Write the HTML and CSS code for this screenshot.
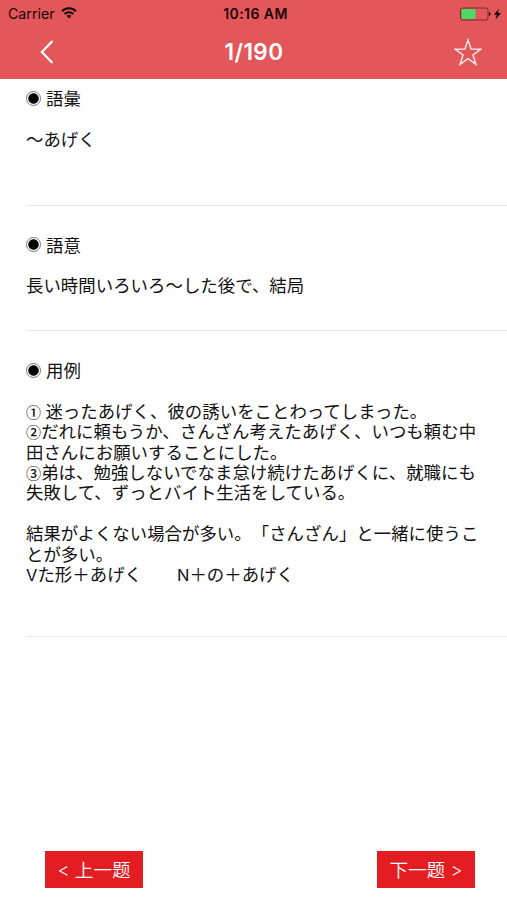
FILE: index.html
```html
<!DOCTYPE html>
<html lang="ja">
<head>
<meta charset="utf-8">
<title>1/190</title>
<link rel="stylesheet" href="styles.css">
</head>
<body>
<header class="header">
  <div class="status">
    <div class="status-left"><span class="carrier">Carrier</span>
      <svg class="wifi" viewBox="0 0 16 12" width="16" height="12"><g fill="none" stroke="#180506" stroke-width="2"><path d="M1 4.2a10 10 0 0 1 14 0"/><path d="M3.6 7a6.2 6.2 0 0 1 8.8 0"/></g><path fill="#180506" d="M5.6 9a3.4 3.4 0 0 1 4.8 0L8 11.4z"/></svg>
    </div>
    <span class="time">10:16 AM</span>
    <div class="status-right">
      <svg viewBox="0 0 43 14" width="43" height="14"><rect x=".5" y="1" width="27.5" height="12" rx="2" fill="none" stroke="#762e2d"/><rect x="1.5" y="2" width="14" height="10" rx="1" fill="#4cd964"/><path d="M29 5a2.1 2.1 0 0 1 0 4z" fill="#180506"/><path d="M39 1.8 33.8 7.8h3l-1.3 4.8 5.6-6.6h-3.2z" fill="#180506"/></svg>
    </div>
  </div>
  <nav class="nav">
    <svg class="back" viewBox="0 0 14 24" width="14" height="24"><path d="M12.5 1 1.8 12l10.7 11" fill="none" stroke="#fff" stroke-width="2.2"/></svg>
    <h1 class="title">1/190</h1>
    <svg class="star" viewBox="0 0 28 28" width="28" height="28"><path d="m14 2 3.1 9.1 9.7.1-7.8 5.8 2.9 9.3-7.9-5.6-7.9 5.6L9 17l-7.8-5.8 9.7-.1z" fill="none" stroke="#ffe6e6" stroke-width="1.5"/></svg>
  </nav>
</header>
<main class="content">
  <section class="entry vocab">
    <h2><i class="bullet"></i>語彙</h2>
    <p>～あげく</p>
  </section>
  <section class="entry meaning">
    <h2><i class="bullet"></i>語意</h2>
    <p>長い時間いろいろ～した後で、結局</p>
  </section>
  <section class="entry examples">
    <h2><i class="bullet"></i>用例</h2>
    <p><span class="num first">①</span>迷ったあげく、彼の誘いをことわってしまった。<br><span class="num">②</span>だれに頼もうか、さんざん考えたあげく、いつも頼む中<br>田さんにお願いすることにした。<br><span class="num">③</span>弟は、勉強しないでなま怠け続けたあげくに、就職にも<br>失敗して、ずっとバイト生活をしている。</p>
    <p>結果がよくない場合が多い。「さんざん」と一緒に使うこ<br>とが多い。<br><span class="latin">V</span>た形＋あげく　　<span class="latin">N</span>＋の＋あげく</p>
  </section>
</main>
<footer class="footer" lang="zh-CN">
  <button class="btn">&lt; 上一题</button>
  <button class="btn">下一题 &gt;</button>
</footer>
</body>
</html>
```
FILE: styles.css
```css
* { box-sizing: border-box; }
body {
  margin: 0;
  height: 900px;
  display: flex;
  flex-direction: column;
  background: #fff;
  color: #111;
  overflow: hidden;
  font-family: "Noto Sans CJK JP", sans-serif;
}
.header {
  height: 79px;
  background: #e3575a;
  font-family: Inter, sans-serif;
}
.status {
  height: 27px;
  display: grid;
  grid-template-columns: 1fr auto 1fr;
  align-items: center;
  padding: 0 4px 0 8px;
  color: #180506;
  font-size: 14px;
}
.status-left { display: flex; align-items: center; gap: 6px; }
.carrier { font-size: 14.2px; }
.wifi { margin-top: -2px; }
.time { font-weight: 600; font-size: 14px; letter-spacing: .45px; }
.status-right { display: flex; justify-content: flex-end; }
.nav {
  height: 50px;
  display: grid;
  grid-template-columns: 1fr auto 1fr;
  align-items: center;
  padding: 0 25px 0 40px;
}
.title {
  margin: 0 0 0 -14px;
  color: #fff;
  font-size: 22.5px;
  font-weight: 600;
  line-height: 28px;
  letter-spacing: .4px;
}
.star { justify-self: end; }
.content { flex: 1; padding-left: 26px; }
.entry {
  border-bottom: 1px solid #e7e7e7;
  font-size: 17.4px;
  letter-spacing: .04px;
  line-height: 20.4px;
  white-space: nowrap;
  text-spacing-trim: space-all;
}
.entry h2 {
  display: flex;
  align-items: center;
  gap: 5px;
  margin: 0;
  font-size: inherit;
  font-weight: 400;
}
.entry p { margin: 20.4px 0 0; }
.vocab { height: 127px; padding-top: 9px; }
.meaning { height: 125px; padding-top: 28.6px; }
.examples { height: 306px; padding-top: 29px; }
.bullet {
  width: 15px;
  height: 15px;
  border: 1px solid #777;
  border-radius: 50%;
  background: radial-gradient(circle, #000 4.8px, #fff 5.6px);
}
.num { display: inline-block; width: 15.2px; font-size: 15px; font-weight: 500; line-height: 1; }
.num.first { width: 19.4px; }
.latin { font-family: Inter, sans-serif; font-size: 16.5px; line-height: 1; }
.footer {
  height: 49px;
  display: flex;
  justify-content: space-between;
  padding: 0 32px 0 45px;
}
.btn {
  width: 98px;
  height: 37px;
  padding: 0 0 2px;
  border: 0;
  background: #e41d23;
  color: #fff;
  font-family: Inter, "Noto Sans CJK SC", sans-serif;
  font-size: 18.6px;
  font-weight: 350;
}
```
